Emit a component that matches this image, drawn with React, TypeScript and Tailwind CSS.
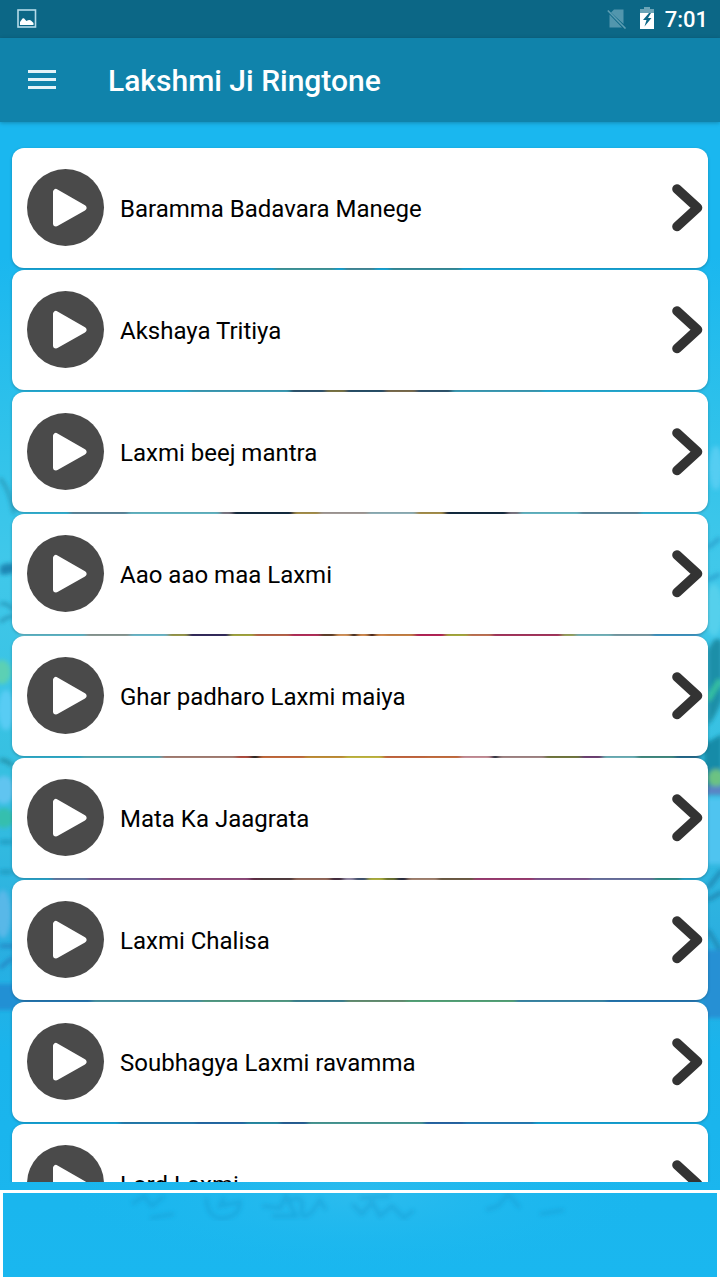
import React from 'react';

interface Ringtone {
  id: number;
  title: string;
}

const ringtones: Ringtone[] = [
  { id: 1, title: 'Baramma Badavara Manege' },
  { id: 2, title: 'Akshaya Tritiya' },
  { id: 3, title: 'Laxmi beej mantra' },
  { id: 4, title: 'Aao aao maa Laxmi' },
  { id: 5, title: 'Ghar padharo Laxmi maiya' },
  { id: 6, title: 'Mata Ka Jaagrata' },
  { id: 7, title: 'Laxmi Chalisa' },
  { id: 8, title: 'Soubhagya Laxmi ravamma' },
  { id: 9, title: 'Lord Laxmi' },
];

// Colour bands of the painting: y, then [x, width, colour]
const bands: { y: number; parts: [number, number, string][] }[] = [
  { y: 260, parts: [[275, 60, '#4aaab0'], [345, 30, '#4d9dae'], [390, 70, '#3f9fae']] },
  { y: 382, parts: [[190, 100, '#45b0cc'], [290, 36, '#34607c'], [326, 20, '#8a8450'], [346, 40, '#2d5a76'], [386, 30, '#8a7a58'], [416, 36, '#34607c'], [452, 90, '#45b0cc']] },
  {
    y: 504,
    parts: [
      [70, 58, '#6898b0'], [128, 92, '#70ccdc'], [220, 12, '#8b8794'], [232, 62, '#12304a'], [294, 26, '#bca356'],
      [320, 48, '#b8b0ac'], [368, 48, '#a4c8d0'], [416, 28, '#bca356'], [444, 64, '#12304a'], [508, 12, '#8b8794'],
      [520, 60, '#70ccdc'], [580, 60, '#6898b0'],
    ],
  },
  {
    y: 626,
    parts: [
      [20, 66, '#6acbde'], [86, 44, '#9dada8'], [130, 38, '#7ad0e4'], [168, 20, '#acac56'], [188, 42, '#3a3368'],
      [230, 24, '#b8bc48'], [254, 36, '#cf7152'], [290, 30, '#cb3566'], [320, 16, '#6d4a30'], [336, 14, '#f0a868'],
      [350, 8, '#43302c'], [358, 10, '#f1a05c'], [368, 8, '#4a2020'], [376, 10, '#f1a05c'], [386, 28, '#e19250'],
      [414, 32, '#cc2a62'], [446, 22, '#bdc046'], [468, 24, '#d88260'], [492, 70, '#ba3d6a'], [562, 14, '#acb86c'],
      [576, 36, '#84ccd4'], [612, 40, '#88b0bc'], [652, 48, '#47a7d8'],
    ],
  },
  {
    y: 748,
    parts: [
      [82, 80, '#62c0cc'], [162, 74, '#bc9084'], [236, 14, '#c85848'], [250, 10, '#33302e'],
      [260, 45, '#dd7844'], [305, 40, '#daa240'], [345, 38, '#dbce4c'], [383, 42, '#de744a'], [425, 36, '#df7c4a'],
      [461, 30, '#e1a2ac'], [491, 8, '#28384c'], [499, 46, '#b89898'], [545, 36, '#828848'], [581, 22, '#7b4c84'],
      [603, 34, '#7cc8d0'], [637, 38, '#4c9c92'], [675, 25, '#2a779c'],
    ],
  },
  {
    y: 870,
    parts: [
      [52, 36, '#7088b8'], [88, 72, '#8a64a4'], [160, 90, '#a2548c'], [250, 10, '#6c3450'], [260, 34, '#5c4448'],
      [294, 36, '#a87868'], [330, 14, '#503448'], [344, 10, '#b0a4c4'], [354, 14, '#4c6080'], [368, 16, '#c4c848'],
      [384, 12, '#7c8438'], [396, 12, '#303448'], [408, 30, '#b89480'], [438, 36, '#7c6850'], [474, 60, '#b04480'],
      [534, 56, '#9060a0'], [590, 64, '#7880b4'], [654, 26, '#38a098'],
    ],
  },
  {
    y: 992,
    parts: [
      [20, 72, '#2c84c4'], [92, 110, '#52a7b8'], [202, 90, '#5fb096'], [292, 54, '#4492a4'], [346, 60, '#72a282'],
      [406, 110, '#60b888'], [516, 90, '#4298bc'], [606, 94, '#2c84c4'],
    ],
  },
  { y: 1114, parts: [[120, 76, '#2b8cc4'], [196, 50, '#2b78bc'], [246, 34, '#2f9cb8'], [280, 28, '#2f67a4'], [308, 116, '#57aba2'], [424, 40, '#2f70b8'], [464, 70, '#2b8ccc']] },
];

const Backdrop: React.FC = () => (
  <svg
    className="absolute inset-0 h-full w-full"
    viewBox="0 0 720 1280"
    preserveAspectRatio="none"
    aria-hidden="true"
  >
    <defs>
      <linearGradient id="water" x1="0" y1="0" x2="0" y2="1">
        <stop offset="0" stopColor="#1ab7ef" />
        <stop offset="0.2" stopColor="#1ab7ef" />
        <stop offset="0.34" stopColor="#30c2ea" />
        <stop offset="0.44" stopColor="#40c8ea" />
        <stop offset="0.62" stopColor="#35bfe0" />
        <stop offset="0.74" stopColor="#2aaee0" />
        <stop offset="0.82" stopColor="#1ab4ec" />
        <stop offset="1" stopColor="#1ab7ef" />
      </linearGradient>
      <radialGradient id="glow">
        <stop offset="0" stopColor="#30bdee" stopOpacity="0.8" />
        <stop offset="1" stopColor="#1ab7ef" stopOpacity="0" />
      </radialGradient>
      <filter id="soft" x="-10%" y="-10%" width="120%" height="120%">
        <feGaussianBlur stdDeviation="2" />
      </filter>
      <filter id="blend" x="-5%" y="-50%" width="110%" height="200%">
        <feGaussianBlur stdDeviation="2 0" />
      </filter>
    </defs>
    <rect width="720" height="1280" fill="url(#water)" />

    {/* waves and leaves along both edges */}
    <g filter="url(#soft)">
      <path d="M0 478q10 12 14 36" stroke="#2798b8" strokeWidth="3" fill="none" />
      <path d="M0 566q6-4 14-2v8q-8 4-14 2z" fill="#1f86b4" />
      <path d="M0 604q8-2 12 6M0 622q8-6 14-6" stroke="#2595b8" strokeWidth="3" fill="none" />
      <ellipse cx="2" cy="672" rx="9" ry="12" fill="#5cd0b4" />
      <ellipse cx="6" cy="710" rx="8" ry="20" fill="#58ccf4" />
      <path d="M0 760q8 0 12 6" stroke="#2290a8" strokeWidth="4" fill="none" />
      <ellipse cx="4" cy="790" rx="10" ry="14" fill="#60c4f0" />
      <ellipse cx="4" cy="818" rx="10" ry="10" fill="#34bfae" />
      <path d="M0 842h12M0 872h12" stroke="#1d9ac0" strokeWidth="4" />
      <ellipse cx="3" cy="914" rx="8" ry="24" fill="#58b8e8" />
      <path d="M0 946h14M0 968l12-10" stroke="#2080c0" strokeWidth="3" />
      <rect x="-4" y="984" width="24" height="26" fill="#2290d4" />
      <ellipse cx="716" cy="468" rx="7" ry="22" fill="#54cdf2" />
      <path d="M708 548l12-10M708 580l12-6" stroke="#2aa4d0" strokeWidth="4" />
      <ellipse cx="714" cy="610" rx="9" ry="26" fill="#54d0ec" />
      <path d="M708 650q8-18 14-8v58q-6 16-14 26z" fill="#1d8fa8" />
      <path d="M708 700l12-20" stroke="#34c0a0" strokeWidth="6" />
      <path d="M704 744l18-10v54l-18 8z" fill="#168ba8" />
      <ellipse cx="716" cy="778" rx="8" ry="9" fill="#6cc282" />
      <rect x="706" y="786" width="18" height="9" fill="#5a84c4" />
      <rect x="706" y="798" width="18" height="66" fill="#50c4f0" />
      <path d="M708 888l14-18M708 900l14-8M708 930l12 20" stroke="#1d88b4" strokeWidth="4" />
      <rect x="702" y="950" width="22" height="68" fill="#2590d4" />
    </g>

    {bands.map((band) => (
      <g key={band.y} filter="url(#blend)">
        {band.parts.map(([x, width, color]) => (
          <rect key={x} x={x} y={band.y} width={width} height="16" fill={color} />
        ))}
      </g>
    ))}

    {/* faint reflection under the list */}
    <ellipse cx="360" cy="1195" rx="300" ry="80" fill="url(#glow)" />
    <g stroke="#1796cc" strokeWidth="4" fill="none" opacity="0.4" filter="url(#soft)">
      <path d="M132 1204l12-8 8 10 12-10M150 1218l24-4" />
      <path d="M206 1198q2 22 18 20t16-16l-20 4 4-8" />
      <path d="M262 1206l18 2 6-12 10 20h-24M290 1200q14-6 12 8t10 4l8-12 6 10" />
      <path d="M352 1204l10 10 10-12 8 14 12-10 12 12 10-8M360 1198l30-2" />
      <path d="M486 1210l12-4 10-12 12 14M540 1214l24-4" />
    </g>
  </svg>
);

const StatusBar: React.FC = () => (
  <div className="flex h-[38px] shrink-0 items-center justify-between bg-[#0c6786] pl-[17px] pr-3">
    <svg className="h-5 w-5" viewBox="0 0 20 20" role="img" aria-label="Screenshot saved">
      <rect x="1" y="1" width="17.5" height="17" fill="none" stroke="#b4dbe9" strokeWidth="1.6" />
      <path d="M3 16v-3l2.5-3.5q1.3-1 2.5 1l1.5 1.5q3-2 5 0l2 2v2z" fill="#fff" />
    </svg>
    <div className="flex items-center">
      <svg className="h-5 w-5" viewBox="0 0 20 20" role="img" aria-label="No SIM card">
        <path d="M7 .5h9.5v14.500L4 3.500zM2.500 5.500L15 18.500H2.500z" fill="#5296ad" />
        <path d="M.8 1.500L18.500 19.500" stroke="#5e9eb3" strokeWidth="1.600" />
      </svg>
      <svg className="ml-3 h-6 w-4" viewBox="0 0 16 24" role="img" aria-label="Battery charging">
        <path d="M1 6V2h4V0h6v2h4v4z" fill="#6ba4b7" />
        <path d="M1 6h14v16H1z" fill="#fff" />
        <path d="M10 6L4 13h3.500L5.500 19.500l7-8.500H9L12 6z" fill="#0c6786" />
      </svg>
      <span className="ml-2.5 pt-0.5 text-[22px] font-medium leading-6 text-white">7:01</span>
    </div>
  </div>
);

const Toolbar: React.FC = () => (
  <header className="relative flex h-[84px] shrink-0 items-center bg-[#1083ab] pl-7 shadow-[0_1px_4px_rgba(0,0,0,0.25)]">
    <button type="button" aria-label="Open menu" className="flex h-7 w-7 items-center">
      <svg className="h-7 w-7" viewBox="0 0 28 28" aria-hidden="true">
        <path d="M0 5.500h28M0 13.500h28M0 21.500h28" stroke="#e4f3f8" strokeWidth="3" />
      </svg>
    </button>
    <h1 className="ml-[52px] pt-0.5 text-[30px] font-medium leading-9 text-white">Lakshmi Ji Ringtone</h1>
  </header>
);

const RingtoneRow: React.FC<{ ringtone: Ringtone }> = ({ ringtone }) => (
  <li>
    <button
      type="button"
      className="flex h-[120px] w-full items-center rounded-xl bg-white pl-[15px] pr-1 text-left shadow-[0_1px_3px_rgba(0,0,0,0.25)]"
    >
      <svg className="h-[78px] w-[78px] shrink-0" viewBox="0 0 78 78" aria-hidden="true">
        <circle cx="38.500" cy="38.500" r="38.500" fill="#4a4a4a" />
        <path
          d="M29 23v31.500L56.500 38.800z"
          fill="#fff"
          stroke="#fff"
          strokeWidth="6"
          strokeLinejoin="round"
        />
      </svg>
      <span className="ml-[15px] flex-1 truncate pt-0.5 text-2xl text-black">{ringtone.title}</span>
      <svg className="h-12 w-8 shrink-0" viewBox="0 0 32 48" aria-hidden="true">
        <path
          d="M5 5L25.500 23.800 5 42.500"
          fill="none"
          stroke="#333"
          strokeWidth="9.6"
          strokeLinecap="round"
          strokeLinejoin="round"
        />
      </svg>
    </button>
  </li>
);

export default function App() {
  return (
    <div className="relative isolate flex h-screen flex-col overflow-hidden bg-[#1ab7ef] font-['Roboto',sans-serif]">
      <div className="absolute inset-0 -z-10">
        <Backdrop />
      </div>
      <StatusBar />
      <Toolbar />
      <main className="min-h-0 flex-1 overflow-y-auto px-3 pt-[26px] [scrollbar-width:none]">
        <ul className="flex flex-col gap-0.5">
          {ringtones.map((ringtone) => (
            <RingtoneRow key={ringtone.id} ringtone={ringtone} />
          ))}
        </ul>
      </main>
      {/* Ad banner slot */}
      <aside aria-label="Advertisement" className="mt-2 h-[90px] shrink-0 border-[3px] border-white" />
    </div>
  );
}
